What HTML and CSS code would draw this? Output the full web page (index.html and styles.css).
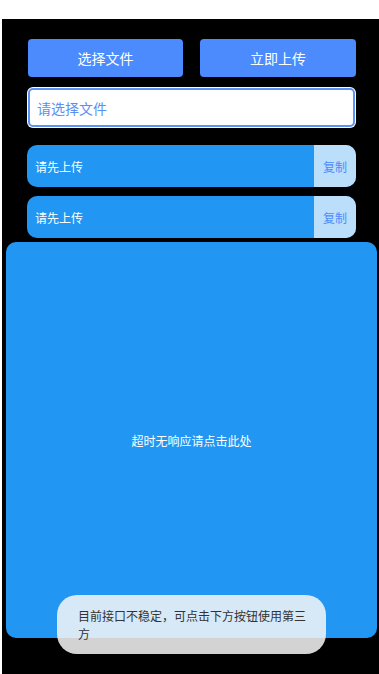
FILE: index.html
```html
<!DOCTYPE html>
<html lang="zh-CN">
<head>
<meta charset="utf-8">
<title>上传</title>
<link rel="stylesheet" href="styles.css">
</head>
<body>
<div class="screen">
  <div class="content">
    <div class="btn-row">
      <div class="btn">选择文件</div>
      <div class="btn">立即上传</div>
    </div>
    <div class="input-ring">
      <div class="input">请选择文件</div>
    </div>
    <div class="link-row first">
      <div class="link-text">请先上传</div>
      <div class="copy">复制</div>
    </div>
    <div class="link-row second">
      <div class="link-text">请先上传</div>
      <div class="copy">复制</div>
    </div>
  </div>
  <div class="panel">超时无响应请点击此处</div>
  <div class="toast">目前接口不稳定，可点击下方按钮使用第三方</div>
</div>
</body>
</html>
```
FILE: styles.css
```css
html, body {
  margin: 0;
  padding: 0;
  background: #ffffff;
}
body {
  font-family: "Noto Sans CJK SC", "Noto Sans", sans-serif;
  width: 379px;
  height: 674px;
  overflow: hidden;
}
.screen {
  position: relative;
  margin: 19px 0 0 2px;
  width: 377px;
  height: 655px;
  background: #000000;
  display: flex;
  flex-direction: column;
}
.content {
  padding: 20px 23px 0 25px;
  display: flex;
  flex-direction: column;
}
.btn-row {
  display: flex;
  justify-content: space-between;
  padding-left: 1px;
  height: 38px;
}
.btn {
  width: 155px;
  height: 38px;
  background: #4b8bfd;
  border-radius: 4px;
  color: #ffffff;
  font-size: 14px;
  display: flex;
  align-items: center;
  justify-content: center;
}
.btn + .btn {
  width: 156px;
}
.input-ring {
  margin-top: 10px;
  height: 41px;
  background: #ffffff;
  border-radius: 6px;
  padding: 1px;
  box-sizing: border-box;
}
.input {
  height: 100%;
  box-sizing: border-box;
  border: 2px solid #5b94f6;
  border-radius: 5px;
  color: #5b8ff1;
  font-size: 14px;
  padding-left: 7px;
  display: flex;
  align-items: center;
}
.link-row {
  height: 42px;
  background: #2196f3;
  border-radius: 10px;
  overflow: hidden;
  display: flex;
  align-items: stretch;
}
.link-row.first {
  margin-top: 17px;
}
.link-row.second {
  margin-top: 9px;
}
.link-text {
  flex: 1;
  color: #ffffff;
  font-size: 12px;
  padding-left: 8px;
  display: flex;
  align-items: center;
}
.copy {
  width: 42px;
  background: #bbdefb;
  color: #4b8bfd;
  font-size: 12px;
  display: flex;
  align-items: center;
  justify-content: center;
}
.panel {
  margin: 4px 0 0 4px;
  width: 371px;
  height: 396px;
  background: #2196f3;
  border-radius: 10px;
  color: #ffffff;
  font-size: 12px;
  display: flex;
  align-items: center;
  justify-content: center;
}
.toast {
  position: absolute;
  left: 55px;
  top: 576px;
  width: 269px;
  box-sizing: border-box;
  padding: 12px 20px 11px 21px;
  background: rgba(246, 246, 246, 0.86);
  border-radius: 20px;
  color: #333333;
  font-size: 12px;
  line-height: 18px;
}
```
